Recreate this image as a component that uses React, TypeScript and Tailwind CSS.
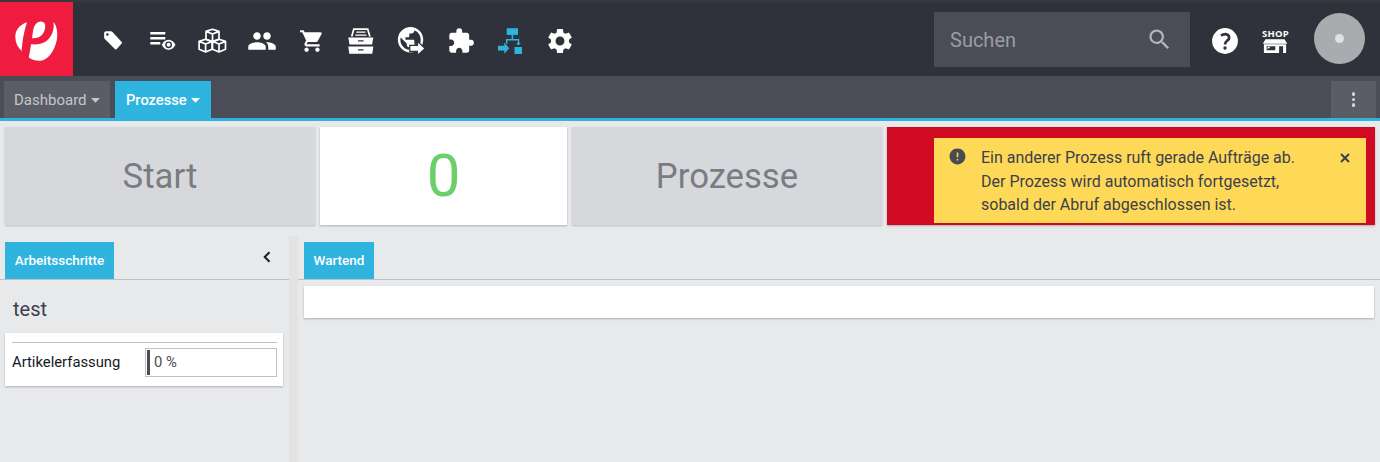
import React from "react";
import { MdPeople, MdShoppingCart, MdExtension, MdSettings, MdSearch, MdError, MdPublic } from "react-icons/md";

function Logo() {
  return (
    <svg width="73" height="74" viewBox="0 2 73 74" className="block">
      <path fill="#fff" d="M27 22.300C19.500 24.800 15.200 30.500 15.300 37c.1 5.500 2.300 10.300 6.300 14C22.300 41 24 31 27 22.300Z" />
      <path fill="#fff" d="M41 21.400c-4.300-.1-7 4-7.900 9.100-.4 2.700-.8 5-1 7.700 4.500.3 8.400-1.200 10.800-4.500 2.200-3.200 2.900-7.300 1.900-10-.7-1.500-2-2.200-3.800-2.300Z" />
      <path fill="#fff" d="M53.600 21.900c3.600 4.500 4.700 12.600 2.700 20.300C53.700 52 47.500 60.200 40.500 60.800c-4.200.3-8.300-1-11.700-3.300l2.300-13.200c6.700.5 12.200-.6 16-3.900 5-4.300 7.300-10.900 6.500-18.500Z" />
    </svg>
  );
}

function TagIcon() {
  return (
    <svg width="30" height="30" viewBox="0 0 30 30" fill="#fff">
      <path fillRule="evenodd" d="M8.300 5.300h4.700c.5 0 .9.200 1.200.5l9.500 10.100c.5.500.5 1.100 0 1.600l-4.900 5.600c-.5.600-1.100.6-1.700.1L6.600 12.800c-.4-.4-.5-.7-.5-1.200V7.300c0-1.200.9-2 2.200-2ZM9.400 7.200a1.300 1.300 0 1 0 0 2.600 1.300 1.300 0 0 0 0-2.600Z" />
    </svg>
  );
}

function ListEyeIcon() {
  return (
    <svg width="30" height="30" viewBox="0 0 30 30">
      <path stroke="#fff" strokeWidth="2.500" d="M2.300 7.200h15M2.300 12.300h15M2.300 17.300h10" />
      <path fill="#fff" stroke="#2f323b" strokeWidth=".8" d="M13.400 18.800c1.500-3.300 4-5.400 7.200-5.400s5.700 2.100 7.200 5.400c-1.500 3.300-4 5.400-7.200 5.400s-5.700-2.100-7.200-5.400Z" />
      <circle cx="20.600" cy="18.800" r="2.700" fill="#fff" stroke="#2f323b" strokeWidth="1.400" />
    </svg>
  );
}

function Cube({ x, y }: { x: number; y: number }) {
  return (
    <g transform={`translate(${x} ${y})`}>
      <path d="M0-6.300 6.500-4.200V3.600L0 6.400-6.500 3.600V-4.200ZM-6.500-4.200 0-1.600 6.500-4.200M0-1.600V6.400" />
    </g>
  );
}

function CubesIcon() {
  return (
    <svg width="30" height="30" viewBox="0 0 30 30" fill="none" stroke="#fff" strokeWidth="1.700" strokeLinejoin="round">
      <Cube x={15.500} y={9.600} />
      <Cube x={8.600} y={19.600} />
      <Cube x={22} y={19.600} />
    </svg>
  );
}

function DrawerIcon() {
  return (
    <svg width="30" height="30" viewBox="0 0 30 30">
      <path fill="none" stroke="#fff" strokeWidth="1.700" d="M5.700 10.600 7.800 3.200h13.900l2.200 7.400" />
      <path stroke="#fff" strokeWidth="1.300" d="M10.300 6.200h9.200M9.300 9.200h11.200" />
      <path fill="#fff" d="M2.300 11.500h25l-1.200 7H3.500ZM2.300 20.400h25l-1 7.300H3.300Z" />
      <path stroke="#2f323b" strokeWidth="1.300" strokeLinecap="round" d="M12.500 14.900h4.600M12.500 23.900h4.600" />
    </svg>
  );
}

function GlobeArrowIcon() {
  return (
    <svg width="30" height="30" viewBox="0 0 30 30">
      <MdPublic x="-.7" y="-1.500" size={30.500} color="#fff" />
      <path fill="#fff" stroke="#2f323b" strokeWidth="1.300" d="M13.800 19.300h7.500v-4l7.900 7.300-7.900 7v-4.100h-7.500Z" />
    </svg>
  );
}

function FlowIcon() {
  return (
    <svg width="30" height="30" viewBox="0 0 30 30" fill="#2fb3df">
      <path d="M11.700 2.200H23v6.700H11.700Z" />
      <path fill="none" stroke="#2fb3df" strokeWidth="1.500" d="M17.400 8.500v5M11.700 17.800v-4h11.800v4.500" />
      <path d="M19.500 21H27v7h-7.500Z" />
      <path d="M21.200 17h4.600l-2.300 2.400ZM3 19.700h6.300v-3.300l4.900 5.800-4.900 5.600v-3.300H3Z" />
    </svg>
  );
}

function HelpIcon() {
  return (
    <svg width="26" height="26" viewBox="0 0 26 26">
      <circle cx="13" cy="13" r="12.900" fill="#fff" />
      <path fill="none" stroke="#2f323b" strokeWidth="2.700" d="M9 7.500C11.600 6 14 5.700 15.700 6.800c1.900 1.300 1.800 3.900.1 5.300-1.600 1.400-2.800 1.900-2.800 4.500" />
      <circle cx="13" cy="20" r="1.700" fill="#2f323b" />
    </svg>
  );
}

function ShopIcon() {
  return (
    <div className="flex w-[30px] flex-col items-center">
      <span className="h-[10px] pl-px font-['Open_Sans',sans-serif] text-[9.500px] leading-[10px] font-bold tracking-[0.2px] text-white">SHOP</span>
      <svg width="26" height="15" viewBox="0 0 26 15">
        <path fill="#fff" d="M3.500.3h19l2.800 4.500H.8Z" />
        <path fill="#fff" fillRule="evenodd" d="M1.900 5.300h22.200v8.700h-3V7.200h-4V14H1.900ZM4.600 7.200v4h8.700v-4Z" />
        <path fill="#fff" d="m5.600 10.200 3-2.400h-3Z" />
      </svg>
    </div>
  );
}

const navIcons = [
  <TagIcon />,
  <ListEyeIcon />,
  <CubesIcon />,
  <MdPeople size={30} />,
  <MdShoppingCart size={26} />,
  <DrawerIcon />,
  <GlobeArrowIcon />,
  <MdExtension size={28} />,
  <FlowIcon />,
  <MdSettings size={30} />,
];

function Caret() {
  return (
    <svg width="9" height="5" viewBox="0 0 9 5" fill="currentColor">
      <path d="M0 0h9L4.500 4.700Z" />
    </svg>
  );
}

export default function App() {
  return (
    <div className="flex h-[462px] w-[1380px] flex-col overflow-hidden bg-[#e8e9eb] font-['Roboto',sans-serif]">
      <header className="flex h-[76px] shrink-0 border-t-2 border-[#37383b] bg-[#2f323b]">
        <div className="h-[74px] w-[73px] bg-[#f01c40]">
          <Logo />
        </div>
        <nav className="ml-[15px] flex h-[78px] items-center text-white">
          {navIcons.map((icon, i) => (
            <div key={i} className="flex w-[49.700px] justify-center">{icon}</div>
          ))}
        </nav>
        <div className="mt-[10px] ml-auto flex h-[55px] w-[256px] items-center justify-between bg-[#4a4c57] pr-[17px] pl-4 text-[#9b9da3]">
          <span className="text-[20px]">Suchen</span>
          <MdSearch size={27} color="#b4b5ba" />
        </div>
        <div className="flex h-[78px] w-[70px] items-center pl-[22px] text-white">
          <HelpIcon />
        </div>
        <div className="flex h-[78px] w-[30px] items-center justify-center">
          <ShopIcon />
        </div>
        <div className="mt-[11px] mr-[15px] ml-[24px] flex size-[51px] items-center justify-center rounded-full bg-[#a9abaf]">
          <span className="size-[9px] rounded-full bg-[#dfe0e1]" />
        </div>
      </header>

      <div className="flex h-[45px] shrink-0 items-end justify-between border-b-[3px] border-[#2fb3df] bg-[#4a4c57] pr-1 pl-1 text-[15px]">
        <div className="flex gap-[5px]">
          <div className="flex h-[37px] w-[106px] items-center gap-1 bg-[#5b5d66] pt-px pl-[10px] text-[#c5c6ca]">
            Dashboard <Caret />
          </div>
          <div className="flex h-[37px] w-[96px] items-center gap-1 bg-[#2fb3df] pt-px pl-[11px] text-[14.700px] font-medium text-white">
            Prozesse <Caret />
          </div>
        </div>
        <div className="flex h-[37px] w-[45px] flex-col items-center justify-center gap-[2px] bg-[#5b5d66]">
          <span className="size-[3.500px] rounded-full bg-[#d4d5d8]" />
          <span className="size-[3.500px] rounded-full bg-[#d4d5d8]" />
          <span className="size-[3.500px] rounded-full bg-[#d4d5d8]" />
        </div>
      </div>

      <section className="flex h-[115px] shrink-0 gap-[5px] pt-[6px] pl-[5px] text-[34.700px] text-[#7a7c84]">
        <div className="flex h-[98px] w-[310px] items-center justify-center bg-[#d7d8db] shadow-[0_1px_2px_rgba(0,0,0,0.2)]">Start</div>
        <div className="flex h-[98px] w-[247px] items-center justify-center bg-white text-[60px] text-[#6bd06b] shadow-[0_1px_2px_rgba(0,0,0,0.25)]">0</div>
        <div className="flex h-[98px] w-[310px] items-center justify-center bg-[#d7d8db] shadow-[0_1px_2px_rgba(0,0,0,0.2)]">Prozesse</div>
        <div className="h-[98px] w-[488px] bg-[#cf0a22] pt-[11px] pl-[47px] shadow-[0_1px_2px_rgba(0,0,0,0.25)]">
          <div className="flex h-[85px] w-[432px] bg-[#fed958] pt-[8px] pl-[14px] text-[16px] leading-[23.500px] text-[#3d3f4c]">
            <MdError size={19} className="mt-px shrink-0" color="#494a52" />
            <p className="ml-[14px] w-[359px]">
              Ein anderer Prozess ruft gerade Aufträge ab.<br />
              Der Prozess wird automatisch fortgesetzt,<br />
              sobald der Abruf abgeschlossen ist.
            </p>
            <svg width="10" height="10" viewBox="0 0 10 10" className="mt-[7px]" stroke="#3d3f4c" strokeWidth="2">
              <path d="m1 1 8 8M9 1 1 9" />
            </svg>
          </div>
        </div>
      </section>

      <main className="flex flex-1 text-[13.500px]">
        <aside className="w-[289px]">
          <div className="flex h-[44px] items-end justify-between border-b border-[#bfc1c6] pr-[18px] pl-[5px]">
            <div className="flex h-[37px] w-[109px] items-center justify-center bg-[#2fb3df] font-medium text-white">Arbeitsschritte</div>
            <svg width="8" height="12" viewBox="0 0 8 12" className="mb-[16px]" fill="none" stroke="#1c1d22" strokeWidth="2">
              <path d="M6.500 1.200 1.700 6l4.800 4.800" />
            </svg>
          </div>
          <h2 className="mt-[16px] ml-[13px] h-[37px] text-[20px] leading-[26px] text-[#3d3f4c]">test</h2>
          <div className="ml-[5px] h-[53px] w-[278px] bg-white pt-[9px] pr-[6px] pl-[7px] shadow-[0_1px_2px_rgba(0,0,0,0.25)]">
            <div className="h-px bg-[#bfc1c6]" />
            <div className="mt-[5px] flex items-center justify-between text-[14.800px] text-[#17181f]">
              <span>Artikelerfassung</span>
              <div className="flex h-[29px] w-[132px] items-center border border-[#bfc1c6] pl-px text-[#4a4c57]">
                <span className="mr-[4px] h-[25px] w-[3px] bg-[#4a4c57]" />
                0 %
              </div>
            </div>
          </div>
        </aside>
        <div className="w-[9px] bg-[#e3e3e4]" />
        <section className="flex-1">
          <div className="flex h-[44px] items-end border-b border-[#bfc1c6] pl-[6px]">
            <div className="flex h-[37px] w-[70px] items-center justify-center bg-[#2fb3df] font-medium text-white">Wartend</div>
          </div>
          <div className="mt-[6px] ml-[6px] h-[32px] w-[1070px] bg-white shadow-[0_1px_2px_rgba(0,0,0,0.25)]" />
        </section>
      </main>
    </div>
  );
}
